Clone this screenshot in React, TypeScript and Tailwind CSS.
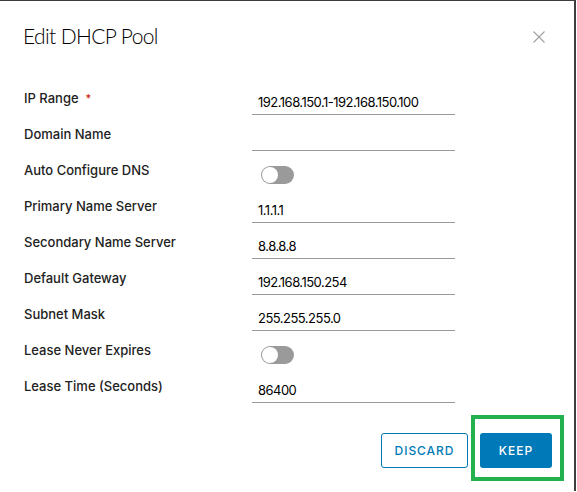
import React from 'react';

type Row = {
  label: string;
  value?: string;
  required?: boolean;
  toggle?: boolean;
};

const rows: Row[] = [
  { label: 'IP Range', value: '192.168.150.1-192.168.150.100', required: true },
  { label: 'Domain Name', value: '' },
  { label: 'Auto Configure DNS', toggle: true },
  { label: 'Primary Name Server', value: '1.1.1.1' },
  { label: 'Secondary Name Server', value: '8.8.8.8' },
  { label: 'Default Gateway', value: '192.168.150.254' },
  { label: 'Subnet Mask', value: '255.255.255.0' },
  { label: 'Lease Never Expires', toggle: true },
  { label: 'Lease Time (Seconds)', value: '86400' },
];

const Toggle = () => (
  <div className="ml-[9px] mt-[10px] relative w-[33px] h-[18px] rounded-full bg-[#9a9a9a]">
    <div className="absolute left-[1px] top-[1px] w-[16px] h-[16px] rounded-full bg-white" />
  </div>
);

export default function App() {
  return (
    <div className="relative w-[577px] h-[492px] bg-white font-['Inter',sans-serif] text-[#222]">
      <div className="w-[576px] h-[491px] border-t border-r-2 border-[#3d3d3d] flex flex-col">
        {/* header */}
        <div className="h-[83px] flex items-start justify-between pl-[23px] pr-[29px] pt-[21px]">
          <h1 className="text-[21px] leading-[28px] font-light tracking-[-0.03em] text-black font-['Lato',sans-serif]">
            Edit DHCP Pool
          </h1>
          <button className="mt-[9px] text-[#a0a0a0]">
            <svg width="12" height="12" viewBox="0 0 12 12" fill="none" stroke="currentColor" strokeWidth="1.1">
              <path d="M0.5 0.5 L11.5 11.5 M11.5 0.5 L0.5 11.5" />
            </svg>
          </button>
        </div>

        {/* form */}
        <div className="flex flex-col pl-[24px]">
          {rows.map((r) => (
            <div key={r.label} className="flex h-[36px]">
              <div className="w-[228px] pt-[6px] leading-[16px] text-[13px] font-medium text-[#222]">
                {r.label}
                {r.required && <span className="ml-[7px] text-[#c92100] text-[11px] align-top">*</span>}
              </div>
              {r.toggle ? (
                <Toggle />
              ) : (
                <div className="w-[203px] h-[31px] border-b border-[#9a9a9a] pl-[6px] pt-[10px] leading-[16px] text-[13px] tracking-[-0.04em] text-black">
                  {r.value}
                </div>
              )}
            </div>
          ))}
        </div>

        {/* footer */}
        <div className="flex justify-end gap-[12px] pr-[22px] mt-[25px]">
          <button className="w-[87px] h-[35px] rounded-[3px] border border-[#0079b8] text-[#0079b8] text-[12px] font-medium tracking-[0.08em]">
            DISCARD
          </button>
          <button className="w-[72px] h-[35px] rounded-[3px] bg-[#0079b8] text-white text-[12px] font-medium tracking-[0.08em]">
            KEEP
          </button>
        </div>
      </div>

      {/* annotation highlight */}
      <div className="absolute left-[471px] top-[415px] w-[93px] h-[66px] border-4 border-[#22b14c]" />
    </div>
  );
}
